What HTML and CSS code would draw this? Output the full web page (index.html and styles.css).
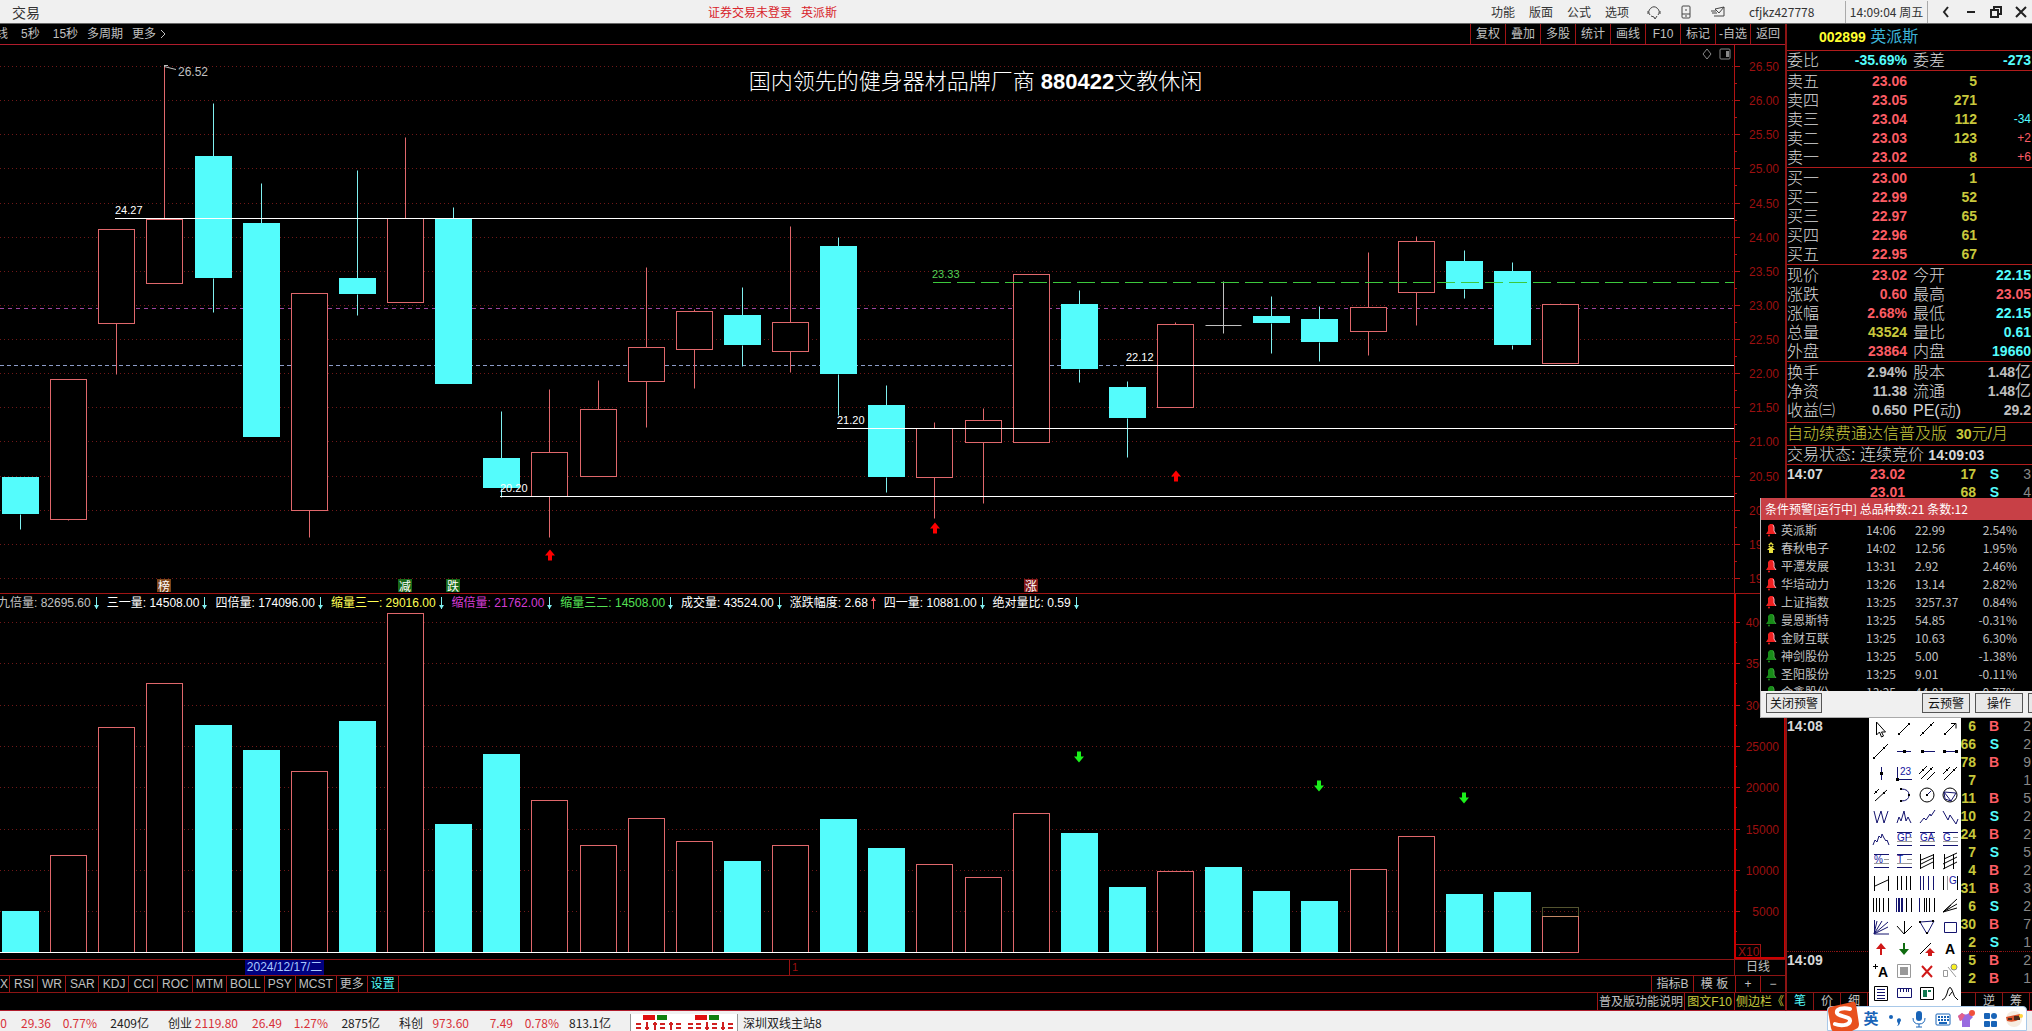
FILE: index.html
```html
<!DOCTYPE html>
<html lang="zh-CN">
<head>
<meta charset="utf-8">
<title>英派斯 002899</title>
<link rel="stylesheet" href="styles.css">
</head>
<body>
<header class="titlebar">
  <button class="menu-item trade">交易</button>
  <p class="login-state"><span>证券交易未登录</span><span>英派斯</span></p>
  <nav class="menu">
    <button class="menu-item">功能</button>
    <button class="menu-item">版面</button>
    <button class="menu-item">公式</button>
    <button class="menu-item">选项</button>
  </nav>
  <div class="title-icons">
    <button class="icon-btn" aria-label="客服"><svg width="16" height="16" viewBox="0 0 16 16"><path d="M4 11a5 5 0 1 1 8 0M2 7v3M14 7v3M5 12l3 1 1 2 2-3"/></svg></button>
    <button class="icon-btn" aria-label="手机"><svg width="16" height="16" viewBox="0 0 16 16"><rect x="4" y="2" width="8" height="12" rx="1"/><path d="M4 10h8M7 12h2M8 5v2"/></svg></button>
    <button class="icon-btn" aria-label="邮件"><svg width="16" height="16" viewBox="0 0 16 16"><path d="M5 5L14 3V12H4M5 5l4 4 5-6M1 7h5M2 9h5"/></svg></button>
  </div>
  <span class="user">cfjkz427778</span>
  <span class="clock">14:09:04 周五</span>
  <div class="window-btns">
    <button class="icon-btn" aria-label="后退"><svg width="14" height="14" viewBox="0 0 14 14"><path d="M9 2L5 7l4 5"/></svg></button>
    <button class="icon-btn" aria-label="最小化"><svg width="14" height="14" viewBox="0 0 14 14"><path d="M3 7h8"/></svg></button>
    <button class="icon-btn" aria-label="还原"><svg width="14" height="14" viewBox="0 0 14 14"><path d="M2 5h7v7H2zM5 5V2h7v7H9"/></svg></button>
    <button class="icon-btn" aria-label="关闭"><svg width="14" height="14" viewBox="0 0 14 14"><path d="M2 2l10 10M12 2L2 12"/></svg></button>
  </div>
</header>

<main class="workspace">
  <section class="left">
    <div class="toolbar">
      <nav class="periods">
        <button>线</button><button>5秒</button><button>15秒</button><button>多周期</button><button>更多 <svg width="8" height="10" viewBox="0 0 8 10"><path d="M2 1l4 4-4 4"/></svg></button>
      </nav>
      <nav class="tools">
        <button>复权</button><button>叠加</button><button>多股</button><button>统计</button><button>画线</button><button>F10</button><button>标记</button><button>-自选</button><button>返回</button>
      </nav>
    </div>
    <div class="pane price-pane">
      <svg class="plot" id="price"></svg>
      <h1 class="headline">国内领先的健身器材品牌厂商 <b>880422</b>文教休闲</h1>
      <div class="pane-icons">
        <svg width="12" height="12" viewBox="0 0 12 12"><path d="M6 1l4 5-4 5-4-5z"/></svg>
        <svg width="12" height="12" viewBox="0 0 12 12"><rect x="1" y="1" width="10" height="10" rx="1"/><path class="solid" d="M7 3h3v6H7z"/></svg>
      </div>
    </div>
    <div class="readout" id="readout"></div>
    <div class="pane volume-pane"><svg class="plot" id="volume"></svg></div>
    <div class="date-row">
      <span class="date-mark">2024/12/17/二</span>
      <span class="month-mark">1</span>
      <button class="period-name">日线</button>
    </div>
    <div class="strip">
      <nav class="indicators">
        <button>X</button><button>RSI</button><button>WR</button><button>SAR</button><button>KDJ</button><button>CCI</button><button>ROC</button><button>MTM</button><button>BOLL</button><button>PSY</button><button>MCST</button><button>更多</button><button class="cyan">设置</button>
      </nav>
      <nav class="strip-right">
        <button class="w42">指标B</button><button class="w42">模 板</button><button class="w25">+</button><button class="w25">−</button>
      </nav>
    </div>
    <div class="strip">
      <nav class="strip-right">
        <button class="w87">普及版功能说明</button><button class="w50 yellow">图文F10</button><button class="w51 yellow">侧边栏《</button>
      </nav>
    </div>
  </section>

  <aside class="quote">
    <h2 class="stock"><b>002899</b> 英派斯</h2>
    <table class="pairs">
      <tr><th>委比</th><td class="down">-35.69%</td><th>委差</th><td class="down">-273</td></tr>
    </table>
    <table class="book">
      <tr><th>卖五</th><td>23.06</td><td>5</td><td></td></tr>
      <tr><th>卖四</th><td>23.05</td><td>271</td><td></td></tr>
      <tr><th>卖三</th><td>23.04</td><td>112</td><td class="down">-34</td></tr>
      <tr><th>卖二</th><td>23.03</td><td>123</td><td>+2</td></tr>
      <tr><th>卖一</th><td>23.02</td><td>8</td><td>+6</td></tr>
    </table>
    <table class="book">
      <tr><th>买一</th><td>23.00</td><td>1</td><td></td></tr>
      <tr><th>买二</th><td>22.99</td><td>52</td><td></td></tr>
      <tr><th>买三</th><td>22.97</td><td>65</td><td></td></tr>
      <tr><th>买四</th><td>22.96</td><td>61</td><td></td></tr>
      <tr><th>买五</th><td>22.95</td><td>67</td><td></td></tr>
    </table>
    <table class="pairs">
      <tr><th>现价</th><td class="up">23.02</td><th>今开</th><td class="down">22.15</td></tr>
      <tr><th>涨跌</th><td class="up">0.60</td><th>最高</th><td class="up">23.05</td></tr>
      <tr><th>涨幅</th><td class="up">2.68%</td><th>最低</th><td class="down">22.15</td></tr>
      <tr><th>总量</th><td class="yellow">43524</td><th>量比</th><td class="down">0.61</td></tr>
      <tr><th>外盘</th><td class="up">23864</td><th>内盘</th><td class="down">19660</td></tr>
    </table>
    <table class="pairs basics">
      <tr><th>换手</th><td>2.94%</td><th>股本</th><td>1.48<i>亿</i></td></tr>
      <tr><th>净资</th><td>11.38</td><th>流通</th><td>1.48<i>亿</i></td></tr>
      <tr><th>收益㈢</th><td>0.650</td><th>PE(动)</th><td>29.2</td></tr>
    </table>
    <p class="notice yellow">自动续费通达信普及版 &nbsp;<b>30</b>元/月</p>
    <p class="notice state">交易状态: 连续竞价 <b>14:09:03</b></p>
    <table class="ticks">
      <tbody>
      <tr><th>14:07</th><td>23.02</td><td>17</td><td class="s">S</td><td>3</td></tr>
      <tr><th></th><td>23.01</td><td>68</td><td class="s">S</td><td>4</td></tr>
      </tbody>
      <tbody class="later">
      <tr><th>14:08</th><td></td><td>6</td><td>B</td><td>2</td></tr>
      <tr><th></th><td></td><td>66</td><td class="s">S</td><td>2</td></tr>
      <tr><th></th><td></td><td>78</td><td>B</td><td>9</td></tr>
      <tr><th></th><td></td><td>7</td><td></td><td>1</td></tr>
      <tr><th></th><td></td><td>11</td><td>B</td><td>5</td></tr>
      <tr><th></th><td></td><td>10</td><td class="s">S</td><td>2</td></tr>
      <tr><th></th><td></td><td>24</td><td>B</td><td>2</td></tr>
      <tr><th></th><td></td><td>7</td><td class="s">S</td><td>5</td></tr>
      <tr><th></th><td></td><td>4</td><td>B</td><td>2</td></tr>
      <tr><th></th><td></td><td>31</td><td>B</td><td>3</td></tr>
      <tr><th></th><td></td><td>6</td><td class="s">S</td><td>2</td></tr>
      <tr><th></th><td></td><td>30</td><td>B</td><td>7</td></tr>
      <tr><th></th><td></td><td>2</td><td class="s">S</td><td>1</td></tr>
      <tr class="minute"><th>14:09</th><td></td><td>5</td><td>B</td><td>2</td></tr>
      <tr><th></th><td></td><td>2</td><td>B</td><td>1</td></tr>
      </tbody>
    </table>
    <nav class="quote-tabs">
      <button class="cyan">笔</button><button>价</button><button>细</button><button></button><button></button><button></button><button></button><button>逆</button><button>筹</button>
    </nav>
  </aside>
</main>

<footer class="status">
  <dl class="index"><dd class="c7">0</dd><dd class="c44">29.36</dd><dd class="c46">0.77%</dd><dd class="total">2409亿</dd></dl>
  <dl class="index"><dt>创业</dt><dd class="c46">2119.80</dd><dd class="c44">26.49</dd><dd class="c46">1.27%</dd><dd class="total">2875亿</dd></dl>
  <dl class="index"><dt>科创</dt><dd class="c46">973.60</dd><dd class="c44">7.49</dd><dd class="c46">0.78%</dd><dd class="total">813.1亿</dd></dl>
  <div class="mood"><svg width="100" height="18" viewBox="0 0 100 18" id="mood"></svg></div>
  <span class="server">深圳双线主站8</span>
</footer>

<section class="alerts">
  <h2>条件预警[运行中] 总品种数:21 条数:12</h2>
  <div class="alert-list"><table id="alerts"></table></div>
  <div class="alert-btns">
    <button>关闭预警</button><button class="push short">云预警</button><button class="short">操作</button><button class="short" aria-label="设置"></button>
  </div>
</section>

<div class="toolbox" id="toolbox"></div>

<div class="ime">
  <svg class="ime-logo" width="32" height="30" viewBox="0 0 32 30"><path fill="#e8501e" d="M3 6L25 1q3-1 4 2l3 20q0 4-3 5l-6 3H8q-3 0-4-4L1 10q0-3 2-4z"/><path fill="none" stroke="#fff" stroke-width="4" stroke-linecap="round" d="M23 8C16 6 9 8 10 12s14 3 13 8-10 5-15 3"/></svg>
  <button>英</button>
  <button aria-label="标点"><svg width="18" height="18" viewBox="0 0 18 18"><circle cx="5" cy="7" r="2"/><path d="M11 10a2 2 0 1 1 3 2q0 3-3 4 2-2 1-3-1 0-1-3z"/></svg></button>
  <button aria-label="语音"><svg width="18" height="18" viewBox="0 0 18 18"><rect x="6" y="1" width="6" height="10" rx="3"/><path class="line" d="M3 8q0 6 6 6t6-6M9 14v3M6 17h6"/></svg></button>
  <button aria-label="键盘"><svg width="18" height="18" viewBox="0 0 18 18"><rect class="line" x="2" y="4" width="14" height="11" rx="1"/><path d="M4 6h2v2H4zM7 6h2v2H7zM10 6h2v2h-2zM13 6h2v2h-2zM4 9h2v2H4zM7 9h2v2H7zM10 9h2v2h-2zM13 9h2v2h-2zM5 12h8v2H5z"/></svg></button>
  <button aria-label="皮肤"><svg width="18" height="18" viewBox="0 0 18 18"><path fill="#9a6be0" d="M1 6l4-3q3 3 7 0l4 4-3 3v7H5v-7l-2 1z"/><path fill="#e4608a" d="M1 6l4-3 3 2-3 5-2 1z"/><circle cx="15" cy="3" r="3" fill="#f0503c"/></svg></button>
  <button aria-label="工具箱"><svg width="18" height="18" viewBox="0 0 18 18"><rect x="3" y="3" width="6" height="6" rx="1"/><circle cx="13" cy="6" r="3"/><rect x="3" y="11" width="6" height="6" rx="1"/><rect x="10" y="11" width="6" height="6" rx="1"/></svg></button>
  <button aria-label="头像"><svg width="18" height="18" viewBox="0 0 18 18"><circle cx="9" cy="9" r="8" fill="#f6ece0"/><path fill="#d8502a" d="M1 7l14-3v5q-6 4-13 2z"/><path fill="#4a2a1c" d="M9 6h6v4H9zM3 8h4v2H3z"/><circle cx="16" cy="6" r="2" fill="#ffd23c"/></svg></button>
</div>
<script src="app.js"></script>
</body>
</html>
```

FILE: styles.css
```css
* { box-sizing: border-box; }
html, body { height: 100%; }
body {
  margin: 0;
  display: flex;
  flex-direction: column;
  position: relative;
  overflow: hidden;
  background: #000;
  color: #c0c0c0;
  font: 12px/16px "Liberation Sans", "Noto Sans CJK SC", sans-serif;
}
h1, h2, p, dl, dd { margin: 0; font-weight: normal; }
button {
  margin: 0;
  padding: 0;
  border: 0;
  background: none;
  color: inherit;
  font: inherit;
  white-space: nowrap;
}
svg { display: block; flex: none; }
i { font-style: normal; font-weight: normal; }
.cyan { color: #54fcfc; }
.yellow { color: #c8c83c; }

/* title bar */
.titlebar {
  flex: none;
  height: 24px;
  display: flex;
  align-items: center;
  background: #f0f0f0;
  border-bottom: 1px solid #666;
  color: #333;
  font-family: "Noto Sans CJK SC", sans-serif;
}
.trade { font-size: 14px; margin-left: 12px; width: 696px; text-align: left; }
.login-state { display: flex; gap: 9px; color: #d8242c; margin-right: auto; }
.menu { display: flex; gap: 14px; }
.title-icons { display: flex; gap: 16px; margin: 0 23px 0 17px; }
.icon-btn svg { fill: none; stroke: #444; }
.user { width: 96px; }
.clock {
  width: 83px;
  text-align: center;
  line-height: 22px;
  border-left: 1px solid #aaa;
  border-right: 1px solid #aaa;
  white-space: nowrap;
}
.window-btns { display: flex; gap: 11px; margin: 0 4px 0 11px; }
.window-btns svg { stroke: #222; stroke-width: 2; }

/* workspace */
.workspace { flex: 1; min-height: 0; display: flex; }
.left { flex: 1; min-width: 0; display: flex; flex-direction: column; overflow: hidden; }
.toolbar {
  flex: none;
  height: 21px;
  display: flex;
  justify-content: space-between;
  border-bottom: 1px solid #b01c2c;
}
.periods { display: flex; gap: 9px; margin-left: -4px; }
.periods button:nth-child(2), .periods button:nth-child(3) { padding-left: 4px; }
.periods svg { display: inline; vertical-align: -1px; fill: none; stroke: #c0c0c0; }
.tools { display: flex; }
.tools button { width: 35px; border-left: 1px solid #a01414; }

.pane { position: relative; min-height: 0; }
.price-pane { flex: 549; border-bottom: 1px solid #a01414; }
.volume-pane { flex: 348; }
.plot { position: absolute; inset: 0; width: 100%; height: 100%; }
.plot text { font-size: 12px; }
.plot .note { font-size: 11px; fill: #fff; }
.plot .axis { fill: #9c1010; text-anchor: end; }
.headline {
  position: absolute;
  top: 22px;
  left: 0;
  right: 0;
  padding-left: 166px;
  text-align: center;
  color: #fff;
  font-size: 22px;
  line-height: 30px;
  font-weight: 300;
}
.headline b { font-weight: bold; }
.pane-icons { position: absolute; top: 3px; right: 54px; display: flex; gap: 6px; }
.pane-icons svg { fill: none; stroke: #888; }
.pane-icons .solid { fill: #888; stroke: none; }
.readout {
  flex: none;
  height: 17px;
  display: flex;
  margin-right: 49px;
  padding-top: 1px;
  border-right: 2px solid #c00;
  overflow: hidden;
  white-space: nowrap;
}
.readout span { display: flex; align-items: center; padding-right: 6px; }
.readout span:first-child { margin-left: -2px; }
.readout svg { margin-left: 1px; }

.date-row, .strip {
  flex: none;
  display: flex;
  border-top: 1px solid #8c1414;
}
.date-row { height: 16px; line-height: 15px; color: #9c1010; }
.date-mark { width: 79px; margin-left: 245px; background: #000080; color: #a8c8ff; text-align: center; white-space: nowrap; }
.month-mark { margin-left: 465px; padding-left: 2px; border-left: 1px solid #9c1010; font-size: 11px; }
.period-name { margin-left: auto; width: 51px; padding-left: 11px; border-left: 1px solid #8c1414; color: #c0c0c0; line-height: 15px; text-align: left; }
.strip { height: 17px; }
.strip:last-child { height: 19px; border-bottom: 1px solid #b01c2c; }
.indicators { display: flex; }
.indicators button { padding: 0 3px 0 4px; border-right: 1px solid #a01414; }
.indicators button:nth-child(n+8) { padding: 0 3px; }
.indicators button:first-child { padding: 0 1px 0 0; }
.strip-right { display: flex; margin-left: auto; }
.strip-right button { border-left: 1px solid #a01414; text-align: center; }
.w25 { width: 25px; }
.w42 { width: 42px; }
.w50 { width: 50px; }
.w51 { width: 51px; }
.w87 { width: 87px; }

/* quote panel */
.quote {
  flex: none;
  width: 247px;
  display: flex;
  flex-direction: column;
  border-left: 2px solid #8c1414;
  border-bottom: 1px solid #b01c2c;
  font-size: 16px;
  line-height: 19px;
  overflow: hidden;
}
.quote b, .quote td { font-size: 14px; font-weight: bold; }
.stock { flex: none; height: 26px; padding-left: 32px; font-size: 16px; line-height: 26px; color: #3cb4d8; }
.stock b { color: #ffff30; }
table { width: 100%; table-layout: fixed; border-collapse: separate; border-spacing: 0; flex: none; }
th, td { padding: 0; text-align: right; white-space: nowrap; }
.quote table:not(.ticks), .notice { border-top: 1px solid #b01c1c; }
.quote tr { height: 19px; }
.quote th { text-align: left; font-weight: 300; color: #d8d8d8; }
.quote td { padding-right: 1px; }
.pairs th:first-child, .book th { width: 50px; }
.pairs td:nth-child(2), .book td:nth-child(2) { width: 71px; }
.pairs th:nth-child(3) { width: 54px; padding-left: 5px; }
.pairs td i { font-size: 16px; line-height: 16px; }
.book td:nth-child(2), .up { color: #fc5c64; }
.book td:nth-child(3) { width: 70px; color: #c8c83c; }
.book td:nth-child(4) { font-size: 12px; font-weight: normal; color: #fc5c64; }
.quote td.down { color: #54fcfc; }
.quote .book tr:first-child, .quote .pairs tr:first-child:not(:last-child) { height: 20px; }
.basics { height: 61px; padding-bottom: 2px; }
.notice { flex: none; height: 23px; line-height: 22px; font-weight: 300; white-space: nowrap; }
.notice.state { height: 20px; line-height: 18px; color: #d8d8d8; border-bottom: 1px solid #b01c1c; }
.quote .ticks tr { height: 18px; }
.ticks { line-height: 18px; }
.quote .ticks th { width: 50px; font-size: 14px; font-weight: bold; }
.ticks td:nth-child(2) { width: 69px; color: #fc5c64; }
.ticks td:nth-child(3) { width: 71px; color: #c8c83c; }
.ticks td:nth-child(4) { width: 23px; color: #fc5c64; }
.ticks td.s { color: #54fcfc; }
.ticks td:nth-child(5) { font-weight: normal; color: #888; }
.ticks .later::before { content: ""; display: block; height: 216px; }
.ticks .minute > * { border-top: 1px dotted #8c1414; line-height: 17px; }
.quote-tabs {
  flex: none;
  margin-top: auto;
  display: flex;
  height: 18px;
  border-top: 1px solid #8c1414;
  font-size: 12px;
  line-height: 17px;
}
.quote-tabs button { width: 27px; border-right: 1px solid #8c1414; }

/* status bar */
.status {
  flex: none;
  height: 20px;
  display: flex;
  align-items: center;
  background: #f0f0f0;
  color: #222;
  font-family: "Noto Sans CJK SC", sans-serif;
  white-space: nowrap;
  padding-top: 4px;
}
.index { display: flex; text-align: right; color: #d83038; }
.index + .index { margin-left: 19px; }
.index dt, .index .total { color: #222; }
.index .total { width: 52px; }
.c7 { width: 7px; }
.c44 { width: 44px; }
.c46 { width: 46px; }
.mood { margin: 0 5px 0 19px; padding: 0 2px 0 4px; border-left: 1px solid #999; border-right: 1px solid #999; background: #fff; }

/* alert window */
.alerts {
  position: absolute;
  top: 498px;
  right: 0;
  width: 272px;
  height: 220px;
  overflow: hidden;
  display: flex;
  flex-direction: column;
  background: #000;
  border-left: 1px solid #bbb;
  font-family: "Noto Sans CJK SC", sans-serif;
}
.alerts h2 { flex: none; height: 22px; padding-left: 4px; background: #c84046; color: #fff; font-size: 12px; line-height: 21px; }
.alert-list { flex: 1; min-height: 0; overflow: hidden; padding-top: 1px; }
.alert-list tr { height: 18px; line-height: 18px; }
.alert-list td { text-align: left; }
.alert-list td:nth-child(1) { width: 20px; padding-left: 4px; }
.alert-list td:nth-child(2) { width: 85px; }
.alert-list td:nth-child(3) { width: 49px; }
.alert-list td:nth-child(4) { width: 54px; }
.alert-list td:nth-child(5) { padding-right: 15px; text-align: right; }
.alert-btns {
  flex: none;
  height: 27px;
  display: flex;
  gap: 5px;
  padding: 2px 0 4px 5px;
  background: #f0f0f0;
  border-bottom: 1px solid #aaa;
  width: 320px;
}
.alert-btns button { flex: none; width: 56px; background: #e8e8e8; border: 1px solid #555; color: #111; line-height: 18px; }
.alert-btns .short { width: 48px; }
.alert-btns .push { margin-left: 95px; }

/* drawing tools */
.toolbox {
  position: absolute;
  top: 718px;
  right: 71px;
  width: 92px;
  height: 289px;
  display: grid;
  grid-template-columns: repeat(4, 23px);
  grid-auto-rows: 22px;
  align-content: start;
  background: #fff;
}
.toolbox button { display: grid; place-items: center; }
.toolbox svg { fill: none; stroke: #14146e; }
.toolbox .k { stroke: #000; }
.toolbox .dot { fill: #000; stroke: none; }
.toolbox .g { stroke: #999; }
.toolbox text { fill: #1414a0; stroke: none; font-size: 10px; }
.toolbox .big { fill: #000; font-size: 14px; font-weight: bold; }

/* input method bar */
.ime {
  position: absolute;
  right: 5px;
  bottom: 0;
  width: 200px;
  height: 25px;
  display: flex;
  align-items: center;
  background: #fff;
  border: 1px solid #a8c8e8;
  border-radius: 4px 4px 0 0;
  color: #1864b8;
  font-size: 15px;
  font-weight: bold;
}
.ime-logo { margin: -6px 0 0 -1px; }
.ime button { width: 24px; display: grid; place-items: center; }
.ime svg { fill: #1864b8; }
.ime .line { fill: none; stroke: #1864b8; }
```

FILE: app.js
```js
// Each day: kind (r = rise, f = fall, d = doji), high, body top, body bottom, low, volume top.
const days = [
  ['f',477,477,514,529,911], ['r',379,379,519,520,855], ['r',229,229,323,374,727], ['r',65,219,283,283,683],
  ['f',103,156,278,312,725], ['f',183,223,437,437,750], ['r',293,293,510,537,771], ['f',170,278,294,315,721],
  ['r',137,218,302,302,613], ['f',207,218,384,384,824], ['f',411,458,488,497,754], ['r',389,452,496,537,800],
  ['r',380,409,476,476,845], ['r',267,347,381,427,818], ['r',309,311,349,388,841], ['f',287,315,345,366,861],
  ['r',226,322,351,372,845], ['f',237,246,374,415,819], ['f',385,405,477,492,848], ['r',422,428,477,518,864],
  ['r',408,420,442,503,877], ['r',274,274,442,442,813], ['f',290,304,369,382,833], ['f',381,387,418,457,887],
  ['r',322,324,407,407,871], ['d',281,325,325,333,867], ['f',296,316,323,353,891], ['f',306,319,342,361,901],
  ['r',252,307,331,355,869], ['r',236,241,292,325,836], ['f',250,261,289,298,894], ['f',262,271,345,349,892],
  ['r',303,304,363,363,916]
];
const STEP = 48.125, FIRST = 20, HALF = 18, AXIS = 51;
const RED = '#e0686c', CYAN = '#54fcfc';
const cx = i => Math.round(FIRST + STEP * i);
const line = (x1, y1, x2, y2, c, more = '') =>
  `<path d="M${x1} ${y1}L${x2} ${y2}" stroke="${c}" fill="none" ${more}/>`;
const box = (x, y, w, h, fill, stroke = 'none', more = '') =>
  `<rect x="${x}" y="${y}" width="${w}" height="${h}" fill="${fill}" stroke="${stroke}" ${more}/>`;
const text = (x, y, t, cls, more = '') => `<text x="${x}" y="${y}" class="${cls}" ${more}>${t}</text>`;
const arrow = (x, y, dir, c) =>
  `<path fill="${c}" d="M${x} ${y}l5 ${6 * dir}h-3v${5 * dir}h-4v${-5 * dir}h-3z"/>`;

function drawPrice() {
  const svg = document.getElementById('price');
  const W = svg.clientWidth, H = svg.clientHeight, right = W - AXIS;
  const Y = v => Math.round((v - 45) * H / 548) + 0.5;
  let s = '';
  for (let i = 0; i < 16; i++) {
    const y = Y(66 + 34.13 * i);
    s += line(0, y, right, y, '#701818', 'stroke-dasharray="1 3"');
    s += line(right, y, right + 6, y, '#b01414');
    if (i < 15) s += line(right, y + 17, right + 3, y + 17, '#b01414');
    s += text(W - 6, y + 4, (26.5 - i / 2).toFixed(2), 'axis');
  }
  s += line(0, Y(308), right, Y(308), '#9c46a0', 'stroke-dasharray="4 4"');
  s += line(0, Y(365), 1126, Y(365), '#8c9cc8', 'stroke-dasharray="4 3"');
  days.forEach(([k, hi, top, bot, lo], i) => {
    const x = cx(i) + 0.5, c = k === 'r' ? RED : k === 'f' ? '#80f0f0' : '#c0c0c0';
    s += line(x, Y(hi), x, Y(top), c) + line(x, Y(bot), x, Y(lo), c);
    if (k === 'd') s += line(x - HALF, Y(top), x + HALF, Y(top), c);
    else if (k === 'r') s += box(x - HALF, Y(top), HALF * 2, Y(bot) - Y(top), '#000', c);
    else s += box(x - HALF - 0.5, Y(top) - 0.5, HALF * 2 + 1, Y(bot) - Y(top), CYAN);
  });
  [[115, 218, '24.27'], [500, 496, '20.20'], [837, 428, '21.20'], [1126, 365, '22.12']].forEach(([x, y, t]) => {
    s += line(x, Y(y), right, Y(y), '#fff') + text(x, Y(y) - 5, t, 'note');
  });
  s += line(933, Y(282), right, Y(282), '#3cc83c', 'stroke-dasharray="18 6"');
  s += text(932, Y(277), '23.33', 'note', 'style="fill:#54d054"');
  s += line(164, Y(66), 176, Y(69), '#c0c0c0') + line(164, Y(65), 168, Y(65), '#c0c0c0');
  s += text(178, Y(75), '26.52', '', 'fill="#c0c0c0"');
  s += arrow(cx(11) + 1, Y(549), 1, '#f00') + arrow(cx(19) + 1, Y(522), 1, '#f00') + arrow(cx(24) + 1, Y(470), 1, '#f00');
  [[3, '榜', '#7c4418'], [8, '减', '#186818'], [9, '跌', '#186818'], [21, '涨', '#801818']].forEach(([i, t, c]) => {
    s += box(cx(i) - 7, Y(579) - 0.5, 14, 13, c) + text(cx(i), Y(590), t, '', 'fill="#fff" text-anchor="middle"');
  });
  s += line(right + 0.5, 0, right + 0.5, H, '#b01414');
  svg.innerHTML = s;
}

function drawVolume() {
  const svg = document.getElementById('volume');
  const W = svg.clientWidth, H = svg.clientHeight, right = W - AXIS;
  const Y = v => Math.round((v - 611) * H / 348) + 0.5;
  let s = '';
  ['40000', '35000', '30000', '25000', '20000', '15000', '10000', '5000'].forEach((t, i) => {
    const y = Y(622 + 41.3 * i);
    s += line(0, y, right, y, '#701818', 'stroke-dasharray="1 3"') + line(right, y, right + 6, y, '#b01414');
    s += line(right, y + 20, right + 3, y + 20, '#b01414') + text(W - 6, y + 4, t, 'axis');
  });
  days.forEach((d, i) => {
    const x = cx(i) + 0.5, h = Y(952) - Y(d[5]);
    if (d[0] === 'r') s += box(x - HALF, Y(d[5]), HALF * 2, h, '#000', RED);
    else s += box(x - HALF - 0.5, Y(d[5]) - 0.5, HALF * 2 + 1, h, CYAN);
  });
  // Green arrows mark the days with shrinking volume.
  s += arrow(cx(22), Y(762), -1, '#1cf01c') + arrow(cx(27), Y(791), -1, '#1cf01c') + arrow(cx(30), Y(803), -1, '#1cf01c');
  s += box(cx(32) + 0.5 - HALF, Y(907), HALF * 2, 9, 'none', '#a8a860', 'stroke-dasharray="1 1"');
  s += line(0, Y(952), cx(32), Y(952), '#fff');
  s += box(right + 1.5, Y(944), 25, 14, 'none', '#a01414') + text(right + 4, Y(955), 'X10', '', 'fill="#9c1010"');
  s += `<path d="M${right + 1} 0V${H - 1}H${W}V0" fill="none" stroke="#c00" stroke-width="2"/>`;
  svg.innerHTML = s;
}

document.getElementById('readout').innerHTML = [
  ['九倍量: 82695.60', '#c0c0c0'], ['三一量: 14508.00', '#fff'], ['四倍量: 174096.00', '#fff'],
  ['缩量三一: 29016.00', '#ffff54'], ['缩倍量: 21762.00', '#d43cd4'], ['缩量三二: 14508.00', '#54e054'],
  ['成交量: 43524.00', '#fff'], ['涨跌幅度: 2.68', '#fff', 1], ['四一量: 10881.00', '#fff'], ['绝对量比: 0.59', '#fff']
].map(([t, c, up]) => `<span style="color:${c}">${t}<svg width="9" height="14" viewBox="0 0 9 14">` +
  (up ? line(4.5, 1, 4.5, 13, '#fc5c64') + '<path fill="#fc5c64" d="M2 5l2.5-4L7 5z"/>'
      : line(4.5, 1, 4.5, 13, '#80f0f0') + '<path fill="#80f0f0" d="M2 9l2.5 4L7 9z"/>') + '</svg></span>').join('');

const bell = c => `<svg width="12" height="14" viewBox="0 0 12 14"><path fill="${c}" d="M5 1h3l1 2v5l2 3H1l2-3V3z"/>` +
  `<path fill="none" stroke="${c === '#f02020' ? '#f8b0c0' : '#48a048'}" d="M8 2l1 2v4l2 3"/><circle cx="4" cy="12.500" r="1" fill="${c}"/></svg>`;
const marks = {
  r: bell('#f02020'), g: bell('#188c18'),
  y: '<svg width="12" height="14" viewBox="0 0 12 14"><path fill="#e8e040" d="M6 1l3 3H7v2h2L6 3 3 6h2V4H3zM6 5l4 4H8v3H4V9H2z"/></svg>'
};
document.getElementById('alerts').innerHTML = [
  'r 英派斯 14:06 22.99 2.54%', 'y 春秋电子 14:02 12.56 1.95%', 'r 平潭发展 13:31 2.92 2.46%',
  'r 华培动力 13:26 13.14 2.82%', 'r 上证指数 13:25 3257.37 0.84%', 'g 曼恩斯特 13:25 54.85 -0.31%',
  'r 金财互联 13:25 10.63 6.30%', 'g 神剑股份 13:25 5.00 -1.38%', 'g 圣阳股份 13:25 9.01 -0.11%',
  'g 金鑫股份 13:25 44.01 -0.77%'
].map(r => { const [m, ...c] = r.split(' '); return `<tr><td>${marks[m]}</td>${c.map(t => `<td>${t}</td>`).join('')}</tr>`; }).join('');

const p = (d, c = '') => `<path class="${c}" d="${d}"/>`;
const dots = (...pts) => pts.map(([x, y]) => `<rect class="dot" x="${x - 1}" y="${y - 1}" width="2" height="2"/>`).join('');
const knobs = (...pts) => pts.map(([x, y]) => `<rect class="dot" x="${x - 1}" y="${y - 1}" width="3" height="3"/>`).join('');
const level = t => p('M2 2.500h15') + text(2, 11, t, '') + p('M12 7.500h5M2 11.500h15', 'g') + p('M2 15.500h15');
const bars = (xs, c) => p(xs.map(x => `M${x + 0.5} 2v14`).join(''), c);
document.getElementById('toolbox').innerHTML = [
  p('M4.500 2v13l3-3 2 5 2-1-2-4h4z', 'k'), p('M4 14L14 4', 'k') + dots([4, 14], [14, 4]),
  p('M2 16L16 2', 'k') + dots([5, 13], [13, 5]), p('M4 14L15 3M10 3.500h5v5', 'k') + dots([4, 14]),
  p('M2 16L16 2', 'k') + dots([2, 16], [12, 6]), p('M2 9.500h14') + knobs([9, 9]),
  p('M4 9.500h13') + knobs([4, 9]), p('M3 9.500h13') + knobs([3, 9], [15, 9]),
  p('M9.500 3v13') + knobs([9, 9]), p('M2.500 3v12M2 15.500h15') + text(5, 11, '23', '') + knobs([2, 15]),
  p('M1 10l8-8M3 15L15 3M9 16l8-8', 'k') + dots([5, 6], [13, 5]), p('M2 10l7-7M3 16L16 3', 'k') + dots([6, 6], [13, 6]),
  p('M2 8l5-5M3 15L15 4', 'k') + dots([4, 6], [12, 7]), p('M6 3q8 0 8 6t-8 6') + dots([6, 3], [6, 15], [14, 9]),
  '<circle class="k" cx="9" cy="9" r="7"/>' + p('M9 9l4-4') + dots([9, 9]), '<circle class="k" cx="9" cy="9" r="7"/>' + p('M3 6l12 1-5 8zM3 6l1 7 6 2'),
  p('M2 3l3 12L9 3l3 12 4-12'), p('M2 15l2-6 2 4 3-10 2 10 2-4 3 6'), p('M2 15l4-5 2 2 4-6 1 2 4-6'), p('M2 3l5 9 2-5 6 9 2-5'),
  p('M1 15l2-5 2 2 2-6 2 2 1-4 2 4 2 3 1-1 2 5'), level('GP'), level('GA'), level('G'),
  level('%'), level('T'), p('M2.500 2v15M15.500 2v15M3 8l12-5M3 12l12-6M3 16l12-6', 'k'), p('M3.500 2v15M12.500 2v15M3 7l13-6M2 12l14-7M2 17l14-7', 'k'),
  p('M2.500 2v15M16.500 2v15M3 12l13-6', 'k'), bars([2, 6, 11, 15], 'k'), bars([2, 5, 10, 15]), bars([2], 'k') + bars([6], 'g') + text(8, 10, 'G', '') + bars([16], 'k'),
  bars([1, 4, 7, 11, 16], 'k'), bars([1, 3, 4, 6, 7]) + bars([11, 16], 'k'), bars([1]) + bars([6, 8, 11, 16], 'k'), p('M2 16L16 3M2 16l14-8M2 16l14-4M2 16l8-7', 'k'),
  p('M2.500 2v14H17M2 16L5 3M2 16L10 3M2 16L16 4M2 16l14-7'), p('M9.500 3v13M2 8l7 8 8-8', 'k'), p('M2 4l14-1-7 13z') + dots([2, 4], [15, 3], [9, 15]), p('M3.500 4.500h12v10h-12z'),
  '<path fill="#d01818" stroke="none" d="M9 3l5 6h-4v6H8V9H4z"/>', '<path fill="#106c10" stroke="none" d="M9 15L4 9h4V3h2v6h4z"/>',
  p('M2 14L13 3', 'k') + '<path fill="#d01818" stroke="none" d="M12 8l5 5h-3v3h-4v-3H7z"/>', text(4, 14, 'A', 'big'),
  text(6, 15, 'A', 'big') + p('M1 4.500h5M3.500 2v5', 'k'), '<path class="g" d="M2.500 2.500h13v13h-13z"/><path fill="#999" stroke="none" d="M5 5h8v8H5z"/>',
  '<path stroke="#d01818" stroke-width="2" d="M4 4l10 11M14 4L4 15"/>', p('M2.500 8.500h4v6h-4zM7 5l8 10', 'g') + '<circle cx="13" cy="5" r="3" fill="#f8f020" stroke="#888"/>',
  p('M2.500 2.500h13v14h-13z', 'k') + p('M5 5.500h8M5 8.500h8M5 11.500h8M5 14.500h8'), p('M2.500 4.500h14v9h-14zM5.500 5v3M8.500 5v3M11.500 5v3M13.500 5v3'),
  p('M2.500 3.500h13v12h-13z', 'k') + '<path fill="#107850" stroke="none" d="M5 6h4v7H5zM10 6h3v2h-3z"/>', p('M1 16q4-1 6-10 2-5 4 0 2 8 6 10M11 8l-3 4', 'k')
].map(icon => `<button><svg width="18" height="18" viewBox="0 0 18 18">${icon}</svg></button>`).join('');

const glyphs = { '=': 'M0 3h5M0 7h5', 'v': 'M3 1v8M1 7h4', '^': 'M3 1v8M1 3h4' };
document.getElementById('mood').innerHTML = [0, 52].map(o => box(8 + o, 1, 12, 5, '#e01010') + box(22 + o, 1, 10, 5, '#108010')).join('') +
  ['=v^=^=', '==v=v='].map((row, r) => [...row].map((g, i) =>
    `<path transform="translate(${1 + r * 52 + i * 8} 7)" fill="none" stroke="#d02020" stroke-width="2" d="${glyphs[g]}"/>`).join('')).join('');

function draw() { drawPrice(); drawVolume(); }
addEventListener('resize', draw);
draw();
```
